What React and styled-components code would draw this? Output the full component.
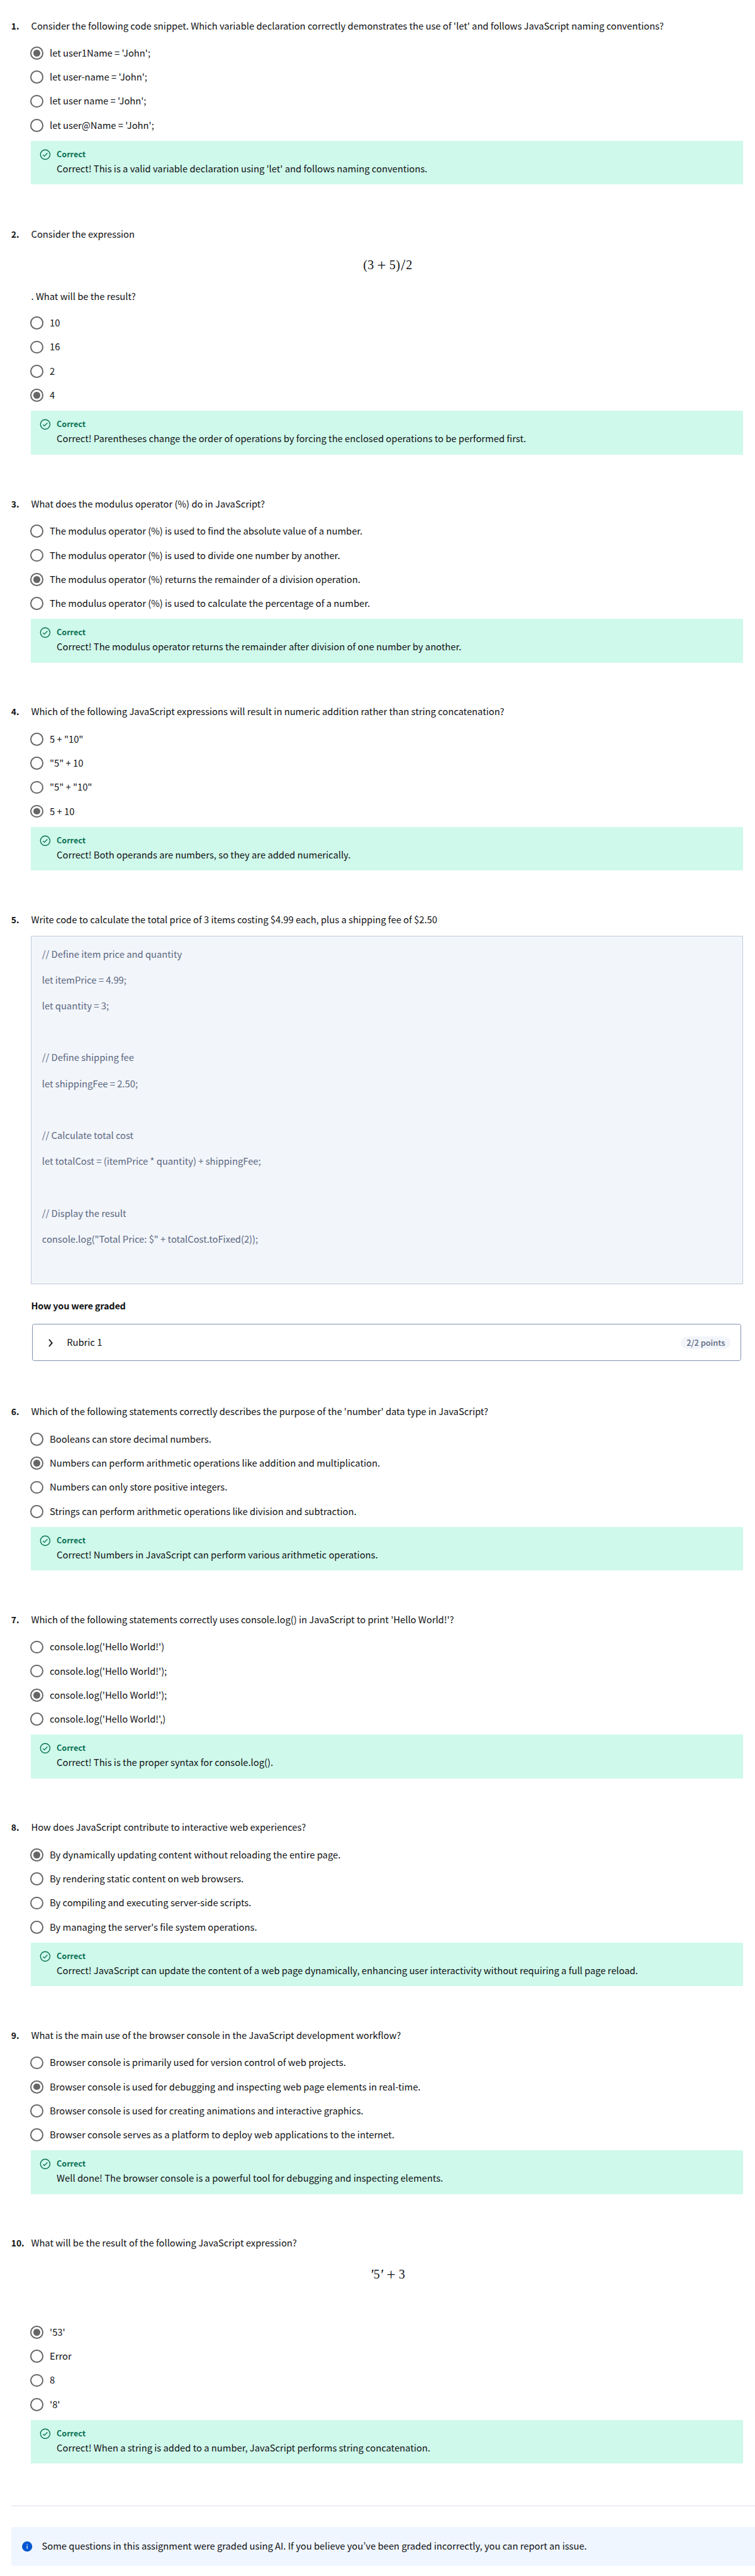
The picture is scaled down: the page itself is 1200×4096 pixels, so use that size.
import React from "react";
import styled, { createGlobalStyle } from "styled-components";

const SCALE = 1200 / 1624;
const u = (n) => `${(n * SCALE).toFixed(3)}px`;

const Global = createGlobalStyle`
  * { box-sizing: border-box; }
  html, body { margin: 0; padding: 0; background: #fff; }
  body {
    font-family: "Noto Sans CJK KR", "Noto Sans", sans-serif;
    font-size: ${u(19.954)};
    color: #0f1114;
  }
  p { margin: 0; }
  svg { display: block; flex: none; }
`;

const Page = styled.main`
  width: 1200px;
  height: 4096px;
  padding: ${u(40)} ${u(24)} 0;
  overflow: hidden;
`;

const Question = styled.section`
  display: grid;
  grid-template-columns: ${u(43)} 1fr;
  height: ${(p) => u(p.$h)};
`;

const Num = styled.span`
  font-weight: 700;
  font-size: ${u(18.8)};
  line-height: ${u(30.4)};
  white-space: nowrap;
`;

const Body = styled.div`
  min-width: 0;
`;

const Text = styled.p`
  height: ${u(28)};
  line-height: ${u(29.6)};
  white-space: pre;
`;

const Formula = styled.div`
  display: flex;
  justify-content: center;
  height: ${u(106.3)};
  padding-top: ${u(34.4)};
  font-family: "Liberation Serif", serif;
  font-size: ${u(27)};
  line-height: ${u(40)};
`;

const Glyph = styled.span`
  display: flex;
  justify-content: center;
  width: ${(p) => p.$w}em;
  margin: 0 ${(p) => (p.$op ? 0.222 : 0)}em;
`;

const Operator = styled.span`
  font-size: 1.25em;
`;

const Prime = styled.span`
  font-size: 1.2em;
  font-style: italic;
`;

const Options = styled.div`
  display: flex;
  flex-direction: column;
  margin-top: ${(p) => u(p.$top)};
`;

const Option = styled.label`
  display: flex;
  align-items: center;
  height: ${u(51.8)};
  gap: ${u(14)};
`;

const Radio = styled.span`
  display: grid;
  place-items: center;
  flex: none;
  width: ${u(28)};
  height: ${u(28)};
  margin-left: ${u(-2)};
  border: 2px solid #666;
  border-radius: 50%;
  &::after {
    content: "";
    width: ${u(14)};
    height: ${u(14)};
    border-radius: 50%;
    background: ${(p) => (p.$on ? "#666" : "transparent")};
  }
`;

const Label = styled(Text)`
  margin-bottom: ${u(3.4)};
`;

const Feedback = styled.div`
  display: grid;
  grid-template-columns: ${u(37)} 1fr;
  height: ${u(94.3)};
  margin: ${u(7.2)} ${u(2)} 0 ${u(-1)};
  padding: ${u(18)} 0 0 ${u(19)};
  background: #cff9eb;
`;

const Verdict = styled.p`
  color: #087051;
  font-weight: 700;
  font-size: ${u(16.95)};
  height: ${u(27)};
  line-height: ${u(21.8)};
`;

const CheckIcon = () => (
  <svg width={u(24)} height={u(24)} viewBox="0 0 24 24" fill="none" stroke="#087051" strokeWidth="1.8">
    <circle cx="12" cy="12" r="10.3" />
    <path d="M7.2 12.6l3 2.8 6.5-6.6" />
  </svg>
);

const Code = styled.div`
  height: ${u(750)};
  margin: ${u(21.7)} ${u(2)} 0 ${u(-1)};
  padding: ${u(9.4)} ${u(23)};
  border: 1px solid #c1cadb;
  background: #f2f5fa;
  color: #5b6780;
`;

const CodeLine = styled(Text)`
  height: ${u(55.8)};
  line-height: ${u(55.8)};
`;

const GradedTitle = styled(Text)`
  margin-top: ${u(31.6)};
  font-weight: 700;
  font-size: ${u(19.5)};
  letter-spacing: -0.16px;
`;

const Rubric = styled.div`
  display: flex;
  align-items: center;
  height: ${u(80)};
  margin: ${u(26.4)} ${u(5.3)} 0 ${u(2.4)};
  padding: 0 ${u(22)} 0 ${u(30)};
  border: 1px solid #8292ae;
  border-radius: ${u(5)};
`;

const RubricName = styled(Text)`
  flex: 1;
  margin: 0 0 ${u(4)} ${u(23)};
`;

const Pill = styled.span`
  padding: 0 ${u(12)} ${u(1)};
  border-radius: ${u(14)};
  background: #f2f5fa;
  color: #5b6780;
  font-weight: 500;
  font-size: ${u(17.3)};
  line-height: ${u(27)};
`;

const Rule = styled.hr`
  height: 1px;
  margin: 0 ${u(-24)} 0 0;
  border: 0;
  background: #dae1ed;
`;

const Banner = styled.aside`
  display: flex;
  align-items: center;
  gap: ${u(20)};
  height: ${u(84)};
  margin: ${u(44.4)} ${u(-24)} 0 0;
  padding-left: ${u(24)};
  border-radius: ${u(5)} 0 0 ${u(5)};
  background: #f0f6ff;
`;

const sum = [["(", 0.389], ["3", 0.5], ["+", 0.778], ["5", 0.5], [")", 0.389], ["/", 0.44], ["2", 0.5]];
const quoted = [["′", 0.28], ["5", 0.5], ["′", 0.28], ["+", 0.778], ["3", 0.5]];

const renderGlyph = (ch) => {
  if (ch === "+" || ch === "/") return <Operator>{ch}</Operator>;
  if (ch === "′") return <Prime>{ch}</Prime>;
  return ch;
};

const questions = [
  { h: 448, text: "Consider the following code snippet. Which variable declaration correctly demonstrates the use of 'let' and follows JavaScript naming conventions?", options: ["let user1Name = 'John';", "let user-name = 'John';", "let user name = 'John';", "let user@Name = 'John';"], answer: 0, note: "Correct! This is a valid variable declaration using 'let' and follows naming conventions." },
  { h: 581, text: "Consider the expression", formula: sum, after: ". What will be the result?", options: ["10", "16", "2", "4"], answer: 3, note: "Correct! Parentheses change the order of operations by forcing the enclosed operations to be performed first." },
  { h: 447.3, text: "What does the modulus operator (%) do in JavaScript?", options: ["The modulus operator (%) is used to find the absolute value of a number.", "The modulus operator (%) is used to divide one number by another.", "The modulus operator (%) returns the remainder of a division operation.", "The modulus operator (%) is used to calculate the percentage of a number."], answer: 2, note: "Correct! The modulus operator returns the remainder after division of one number by another." },
  { h: 447.3, text: "Which of the following JavaScript expressions will result in numeric addition rather than string concatenation?", options: ["5 + \"10\"", "\"5\" + 10", "\"5\" + \"10\"", "5 + 10"], answer: 3, note: "Correct! Both operands are numbers, so they are added numerically." },
  { h: 1059, text: "Write code to calculate the total price of 3 items costing $4.99 each, plus a shipping fee of $2.50", code: ["// Define item price and quantity", "let itemPrice = 4.99;", "let quantity = 3;", "", "// Define shipping fee", "let shippingFee = 2.50;", "", "// Calculate total cost", "let totalCost = (itemPrice * quantity) + shippingFee;", "", "// Display the result", "console.log(\"Total Price: $\" + totalCost.toFixed(2));"] },
  { h: 447.3, text: "Which of the following statements correctly describes the purpose of the 'number' data type in JavaScript?", options: ["Booleans can store decimal numbers.", "Numbers can perform arithmetic operations like addition and multiplication.", "Numbers can only store positive integers.", "Strings can perform arithmetic operations like division and subtraction."], answer: 1, note: "Correct! Numbers in JavaScript can perform various arithmetic operations." },
  { h: 447.3, text: "Which of the following statements correctly uses console.log() in JavaScript to print 'Hello World!'?", options: ["console.log('Hello World!')", "console.log('Hello World!');", "console.log('Hello World!');", "console.log('Hello World!',)"], answer: 2, note: "Correct! This is the proper syntax for console.log()." },
  { h: 447.3, text: "How does JavaScript contribute to interactive web experiences?", options: ["By dynamically updating content without reloading the entire page.", "By rendering static content on web browsers.", "By compiling and executing server-side scripts.", "By managing the server's file system operations."], answer: 0, note: "Correct! JavaScript can update the content of a web page dynamically, enhancing user interactivity without requiring a full page reload." },
  { h: 447.3, text: "What is the main use of the browser console in the JavaScript development workflow?", options: ["Browser console is primarily used for version control of web projects.", "Browser console is used for debugging and inspecting web page elements in real-time.", "Browser console is used for creating animations and interactive graphics.", "Browser console serves as a platform to deploy web applications to the internet."], answer: 1, note: "Well done! The browser console is a powerful tool for debugging and inspecting elements." },
  { h: 580.3, text: "What will be the result of the following JavaScript expression?", formula: quoted, after: " ", options: ["'53'", "Error", "8", "'8'"], answer: 0, note: "Correct! When a string is added to a number, JavaScript performs string concatenation." },
];

export default function App() {
  return (
    <>
      <Global />
      <Page>
        {questions.map((q, i) => (
          <Question key={i} $h={q.h}>
            <Num>{i + 1}.</Num>
            <Body>
              <Text>{q.text}</Text>
              {q.formula && (
                <Formula>
                  {q.formula.map(([ch, w], k) => (
                    <Glyph key={k} $w={w} $op={ch === "+"}>
                      {renderGlyph(ch)}
                    </Glyph>
                  ))}
                </Formula>
              )}
              {q.after && <Text>{q.after}</Text>}
              {q.code && (
                <>
                  <Code>{q.code.map((line, k) => <CodeLine key={k}>{line}</CodeLine>)}</Code>
                  <GradedTitle>How you were graded</GradedTitle>
                  <Rubric>
                    <svg width={u(20)} height={u(20)} viewBox="0 0 20 20" fill="none" stroke="#0f1114" strokeWidth="2.5">
                      <path d="M5.4 2.4l6.4 7.6-6.4 7.6" />
                    </svg>
                    <RubricName>Rubric 1</RubricName>
                    <Pill>2/2 points</Pill>
                  </Rubric>
                </>
              )}
              {q.options && (
                <>
                  <Options $top={q.formula ? 19 : 20.5}>
                    {q.options.map((o, k) => (
                      <Option key={k}>
                        <Radio $on={k === q.answer} />
                        <Label>{o}</Label>
                      </Option>
                    ))}
                  </Options>
                  <Feedback>
                    <CheckIcon />
                    <div>
                      <Verdict>Correct</Verdict>
                      <Text>{q.note}</Text>
                    </div>
                  </Feedback>
                </>
              )}
            </Body>
          </Question>
        ))}
        <Rule />
        <Banner>
          <svg width={u(22)} height={u(22)} viewBox="0 0 22 22">
            <circle cx="11" cy="11" r="11" fill="#0056d2" />
            <path d="M11 9.3V16M11 5.8V7.6" stroke="#fff" strokeWidth="1.7" />
          </svg>
          <Label>Some questions in this assignment were graded using AI. If you believe you’ve been graded incorrectly, you can report an issue.</Label>
        </Banner>
      </Page>
    </>
  );
}
